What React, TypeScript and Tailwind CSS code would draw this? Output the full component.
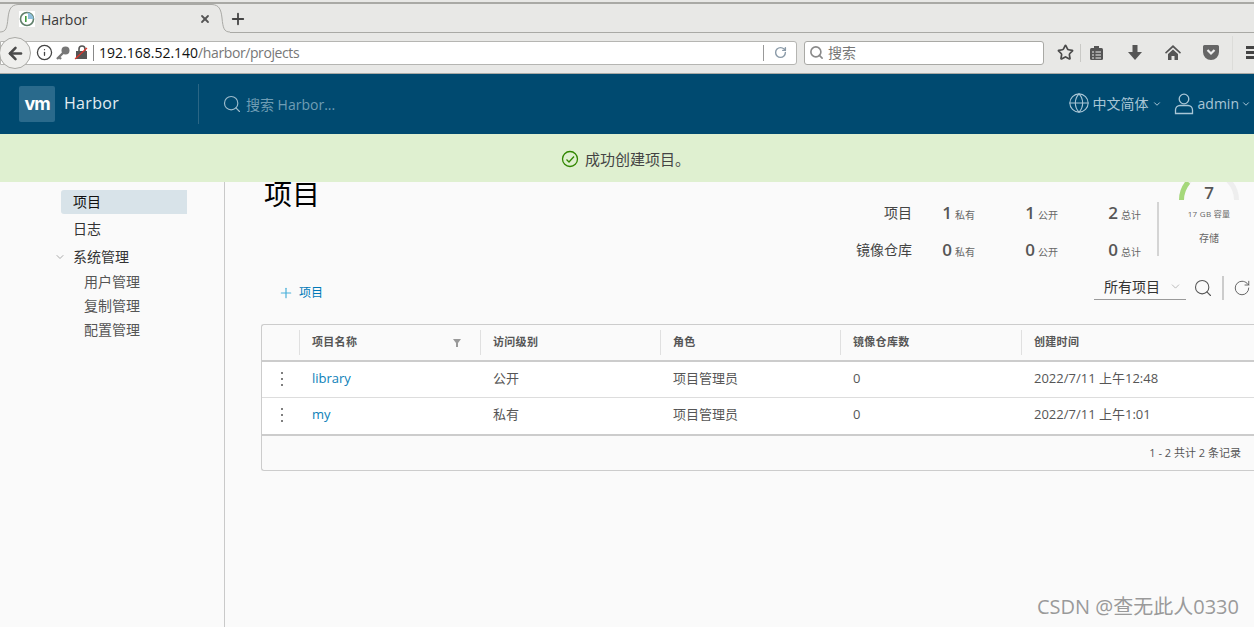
import React from "react";
import { ChevronDown, Plus, RotateCw, Search, Globe, Star, ArrowLeft, Info, X } from "lucide-react";

const cjk = "font-['Open_Sans','Noto_Sans_CJK_SC',sans-serif]";

const stats = [
  { label: "项目", cells: [["1", "私有"], ["1", "公开"], ["2", "总计"]] },
  { label: "镜像仓库", cells: [["0", "私有"], ["0", "公开"], ["0", "总计"]] },
];

const columns = [
  { name: "项目名称", width: "w-[181px]" },
  { name: "访问级别", width: "w-[180px]" },
  { name: "角色", width: "w-[180px]" },
  { name: "镜像仓库数", width: "w-[181px]" },
  { name: "创建时间", width: "flex-1" },
];

const rows = [
  { name: "library", access: "公开", role: "项目管理员", repos: "0", time: "2022/7/11 上午12:48" },
  { name: "my", access: "私有", role: "项目管理员", repos: "0", time: "2022/7/11 上午1:01" },
];

function TabBar() {
  return (
    <div className="h-[31px] border-t-2 border-[#a9a9a5] mt-[2px] -mb-px flex items-end relative">
      <div className="absolute left-0 right-0 bottom-0 h-px bg-[#a9a9a5]" />
      <div className="relative z-10 w-[230px] h-[29px] flex">
        <svg width="18" height="29" viewBox="0 0 18 29" className="shrink-0">
          <path d="M0 28C6 28 7 24 8 14C9 5 11 1 18 .5V29H0z" fill="#e8e8e6" />
          <path d="M0 28C6 28 7 24 8 14C9 5 11 1 18 .5" fill="none" stroke="#a9a9a5" />
        </svg>
        <div className="flex-1 border-t border-[#a9a9a5] bg-[#e8e8e6] flex items-center pl-[1px] pr-[1px]">
          <svg width="16" height="16" viewBox="0 0 16 16" className="shrink-0">
            <rect width="16" height="16" fill="#fff" />
            <circle cx="8" cy="8" r="6.5" fill="none" stroke="#5f7f6a" strokeWidth="1.6" />
            <path d="M8 1.500a6.500 6.500 0 0 1 6.500 6.500H9V3z" fill="#8fc0dc" />
            <rect x="6" y="5" width="1.6" height="6" fill="#3f9a3a" />
          </svg>
          <span className="ml-[6px] text-[14px] text-[#3a3a3a] font-['Open_Sans',sans-serif]">Harbor</span>
          <X size={12} strokeWidth={3.6} className="ml-auto text-[#555]" />
        </div>
        <svg width="18" height="29" viewBox="0 0 18 29" className="shrink-0">
          <path d="M18 28C12 28 11 24 10 14C9 5 7 1 0 .5V29H18z" fill="#e8e8e6" />
          <path d="M18 28C12 28 11 24 10 14C9 5 7 1 0 .5" fill="none" stroke="#a9a9a5" />
        </svg>
      </div>
      <Plus size={18} strokeWidth={2.4} className="z-10 -ml-[1px] mb-[5px] text-[#444]" />
    </div>
  );
}

function NavBar() {
  return (
    <div className="h-[42px] flex items-center relative border-b border-[#a9a9a5]">
      <div className="absolute left-[-1px] top-[5px] w-[32px] h-[32px] rounded-full bg-[#efefed] border border-[#a9a9a5] flex items-center justify-center z-10">
        <ArrowLeft size={19} strokeWidth={3.2} className="text-[#4a4a4a]" />
      </div>
      <div className="w-[797px] h-[24px] bg-white border border-[#b5b5b2] rounded-r-[3px] flex items-center pl-[35px] pr-[9px]">
        <Info size={17} strokeWidth={1.8} className="text-[#444]" />
        <svg width="14" height="14" viewBox="0 0 14 14" className="ml-[3px]">
          <circle cx="9.500" cy="4.500" r="4" fill="#777" />
          <path d="M7 7L1 13M3 11l2 2" stroke="#777" strokeWidth="2.400" fill="none" />
        </svg>
        <svg width="14" height="15" viewBox="0 0 14 15" className="ml-[4px]">
          <rect x="2" y="6" width="11" height="8" fill="#555" />
          <path d="M5 6V4a3 3 0 0 1 6 0v2" fill="none" stroke="#555" strokeWidth="1.6" />
          <path d="M1 14L13 3" stroke="#e0362c" strokeWidth="1.200" />
        </svg>
        <span className="ml-[5px] w-px h-[16px] bg-[#888]" />
        <span className="ml-[5px] text-[14px] text-[#111] font-['Open_Sans',sans-serif]">
          192.168.52.140<span className="text-[#777] tracking-[-0.4px]">/harbor/projects</span>
        </span>
        <span className="ml-auto w-px h-[16px] bg-[#999]" />
        <RotateCw size={13} strokeWidth={2.6} className="ml-[10px] text-[#8a9aa8]" />
      </div>
      <div className={`ml-[7px] w-[240px] h-[24px] bg-white border border-[#a9a9a5] rounded-[3px] flex items-center pl-[4px] ${cjk}`}>
        <Search size={15} strokeWidth={2.6} className="text-[#8a8a8a]" />
        <span className="ml-[4px] text-[14px] text-[#777]">搜索</span>
      </div>
      <Star size={17} strokeWidth={2.4} className="ml-[13px] text-[#4a4a4a]" />
      <span className="ml-[6px] w-px h-[18px] bg-[#c9c9c6]" />
      <svg width="15" height="16" viewBox="0 0 15 16" className="ml-[8px]">
        <rect x="1" y="3" width="13" height="12" rx="1.500" fill="#555" />
        <rect x="5" y="1" width="5" height="3" fill="#555" />
        <path d="M3 7h2M3 10h2M3 13h2M6.500 7H12M6.500 10H12M6.500 13H12" stroke="#eee" strokeWidth="1" />
      </svg>
      <svg width="14" height="15" viewBox="0 0 14 15" className="ml-[24px]">
        <path d="M4.500 0h5v7H14l-7 8-7-8h4.500z" fill="#555" />
      </svg>
      <svg width="16" height="15" viewBox="0 0 16 15" className="ml-[23px]">
        <path d="M8 0L0 7.500l1 1.200L8 2.500l7 6.200 1-1.200z" fill="#555" />
        <path d="M3 9l5-4.500L13 9v6H9.500v-4h-3v4H3z" fill="#555" />
      </svg>
      <svg width="16" height="15" viewBox="0 0 16 15" className="ml-[22px]">
        <path d="M1.500 0h13A1.500 1.500 0 0 1 16 1.500V7A8 8 0 0 1 0 7V1.500A1.500 1.500 0 0 1 1.500 0z" fill="#666" />
        <path d="M4.500 5L8 8.500 11.500 5" fill="none" stroke="#eee" strokeWidth="2.200" />
      </svg>
      <span className="ml-[13px] w-px h-[34px] bg-[#dcdcd9]" />
      <div className="ml-[13px] w-[8px] flex flex-col gap-[2px] overflow-hidden">
        <span className="h-[3px] w-[16px] bg-[#444]" />
        <span className="h-[3px] w-[16px] bg-[#444]" />
        <span className="h-[3px] w-[16px] bg-[#444]" />
      </div>
    </div>
  );
}

function Header() {
  return (
    <header className={`h-[60px] bg-[#004a70] flex items-center text-[#a9c6d6] ${cjk}`}>
      <div className="ml-[19px] w-[36px] h-[36px] bg-[#2a6a8c] rounded-[2px] flex items-center justify-center">
        <span className="text-white text-[18px] font-bold tracking-[-1px] font-['Inter',sans-serif] leading-none">vm</span>
      </div>
      <span className="ml-[9px] mb-[2px] text-[16px] text-[#e3edf2] tracking-[0.3px]">Harbor</span>
      <span className="ml-[79px] w-px h-[40px] bg-[#2a6685]" />
      <Search size={20} strokeWidth={1.4} className="ml-[23px] text-[#9dbccc]" />
      <span className="ml-[4px] text-[14px] text-[#6f9db4]">搜索 Harbor...</span>
      <Globe size={22} strokeWidth={1.2} className="ml-auto mb-[2px] text-[#a9c6d6]" />
      <span className="ml-[3px] mb-[2px] text-[14px]">中文简体</span>
      <ChevronDown size={10} strokeWidth={2.4} className="ml-[3px]" />
      <svg width="20" height="22" viewBox="0 0 20 22" fill="none" stroke="currentColor" strokeWidth="1.300" className="ml-[12px]">
        <circle cx="10" cy="6" r="4.800" />
        <path d="M1.500 20.500V17a4.500 4.500 0 0 1 4.500-4.500h8a4.500 4.500 0 0 1 4.500 4.500v3.500z" />
      </svg>
      <span className="ml-[4px] mb-[2px] text-[14px]">admin</span>
      <ChevronDown size={10} strokeWidth={2.4} className="ml-[2px] mr-[3px]" />
    </header>
  );
}

function Sidebar() {
  return (
    <aside className="w-[225px] shrink-0 border-r border-[#c9c9c9] pt-[8px] text-[14px] text-[#333]">
      <div className="ml-[61px] w-[126px] h-[24px] bg-[#d8e3e9] rounded-l-[3px] pl-[12px] leading-[24px] text-[#111]">项目</div>
      <div className="ml-[73px] mt-[2px] h-[25px] leading-[25px] text-[#333]">日志</div>
      <div className="ml-[54px] mt-[3px] h-[25px] flex items-center">
        <ChevronDown size={12} className="text-[#aaa]" />
        <span className="ml-[7px]">系统管理</span>
      </div>
      <div className="ml-[84px] mt-[1px] text-[#555]">
        <div className="h-[24px] leading-[24px]">用户管理</div>
        <div className="h-[24px] leading-[24px]">复制管理</div>
        <div className="h-[24px] leading-[24px]">配置管理</div>
      </div>
    </aside>
  );
}

function StatsPanel() {
  return (
    <div className="flex">
      <div className="grid grid-cols-[auto_63px_83px_83px] grid-rows-[37px_37px] items-center mt-[12px] h-[74px]">
        {stats.map((row) => (
          <React.Fragment key={row.label}>
            <span className="text-right text-[14px] text-[#444]">{row.label}</span>
            {row.cells.map(([num, label], i) => (
              <span key={i} className="text-right text-[#666]">
                <span className="text-[17px] font-semibold text-[#565656]">{num}</span>
                <span className="ml-[3px] text-[10px]">{label}</span>
              </span>
            ))}
          </React.Fragment>
        ))}
      </div>
      <div className="ml-[16px] mt-[20px] h-[54px] w-[2px] bg-[#d4d4d4]" />
      <div className="relative w-[95px] flex flex-col items-center pl-[5px]">
        <svg width="64" height="18" viewBox="0 0 64 18" className="shrink-0">
          <path d="M4.500 18A27.500 27.500 0 0 1 59.500 18" fill="none" stroke="#eeeeee" strokeWidth="5" />
          <path d="M4.500 18A27.500 27.500 0 0 1 11.200 0" fill="none" stroke="#a5d87a" strokeWidth="5" />
        </svg>
        <span className="absolute -top-[2px] text-[17px] font-semibold text-[#565656]">7</span>
        <span className="mt-[8px] text-[8px] text-[#666] tracking-[0.3px] leading-[12px] whitespace-nowrap">17 GB 容量</span>
        <span className="mt-[11px] text-[10px] text-[#666] leading-[14px]">存储</span>
      </div>
    </div>
  );
}

function ProjectTable() {
  return (
    <div className="ml-[36px] h-[147px] border border-[#ccc] border-r-0 rounded-l-[3px] bg-[#fafafa] flex flex-col">
      <div className="h-[35px] flex items-center shrink-0 text-[11px] font-semibold text-[#565656] tracking-[0.3px]">
        <div className="w-[37px]" />
        {columns.map((col, i) => (
          <div key={col.name} className={`${col.width} h-[25px] border-l border-[#e0e0e0] pl-[12px] flex items-center`}>
            <span>{col.name}</span>
            {i === 0 && (
              <svg width="8" height="8" viewBox="0 0 8 8" className="ml-[96px]">
                <path d="M0 0h8L5 4v4H3V4z" fill="#999" />
              </svg>
            )}
          </div>
        ))}
      </div>
      <div className="h-[2px] bg-[#ccc]" />
      {rows.map((row, i) => (
        <div key={row.name} className={`h-[36px] pb-[2px] flex items-center bg-white text-[13px] text-[#565656] ${i === 0 ? "border-b border-[#ddd]" : ""}`}>
          <div className="w-[37px] flex flex-col items-center gap-[4px] pl-[3px]">
            <span className="w-[2px] h-[2px] bg-[#555] rounded-full" />
            <span className="w-[2px] h-[2px] bg-[#555] rounded-full" />
            <span className="w-[2px] h-[2px] bg-[#555] rounded-full" />
          </div>
          <div className="w-[181px] pl-[13px] text-[#0d7fb8]">{row.name}</div>
          <div className="w-[180px] pl-[13px]">{row.access}</div>
          <div className="w-[180px] pl-[13px]">{row.role}</div>
          <div className="w-[181px] pl-[13px]">{row.repos}</div>
          <div className="flex-1 pl-[13px]">{row.time}</div>
        </div>
      ))}
      <div className="h-[2px] bg-[#ccc]" />
      <div className="flex-1 flex items-center justify-end pr-[13px] text-[11px] text-[#565656]">1 - 2 共计 2 条记录</div>
    </div>
  );
}

export default function App() {
  return (
    <div className={`w-[1254px] h-[627px] overflow-hidden flex flex-col bg-[#fafafa] relative ${cjk}`}>
      <div className="h-[74px] shrink-0 bg-[#e8e8e6] overflow-hidden">
        <TabBar />
        <NavBar />
      </div>
      <Header />
      <div className="h-[48px] shrink-0 bg-[#dff0d0] flex items-center justify-center text-[15px] text-[#444] pt-[2px] pr-[3px]">
        <svg width="18" height="18" viewBox="0 0 18 18" className="mr-[6px]">
          <circle cx="9" cy="9" r="7.500" fill="none" stroke="#318700" strokeWidth="1.300" />
          <path d="M5.500 9.500l2.500 2.500 5-5.500" fill="none" stroke="#318700" strokeWidth="1.300" />
        </svg>
        成功创建项目。
      </div>
      <div className="flex-1 flex min-h-0">
        <Sidebar />
        <main className="flex-1 min-w-0">
          <div className="flex justify-between h-[92px]">
            <h1 className="ml-[39px] text-[28px] leading-[28px] text-black -mt-[2px]">项目</h1>
            <StatsPanel />
          </div>
          <div className="h-[50px] pt-[2px] flex items-start">
            <div className="ml-[53px] mt-[8px] h-[18px] flex items-center text-[12px] text-[#0079b8]">
              <Plus size={16} strokeWidth={1.8} className="text-[#49afd9]" />
              <span className="ml-[5px]">项目</span>
            </div>
            <div className="ml-auto flex items-center">
              <div className="w-[92px] h-[24px] pb-[2px] border-b border-[#9a9a9a] flex items-center pl-[10px] text-[14px] text-[#333]">
                所有项目
                <ChevronDown size={13} strokeWidth={1.2} className="ml-auto mr-[4px] text-[#999]" />
              </div>
              <Search size={20} strokeWidth={1.3} className="ml-[7px] text-[#565656]" />
              <span className="ml-[9px] w-[2px] h-[24px] bg-[#ccc]" />
              <RotateCw size={18} strokeWidth={1.2} className="ml-[9px] mr-[3px] text-[#565656]" />
            </div>
          </div>
          <ProjectTable />
        </main>
      </div>
      <span className="absolute right-[15px] bottom-[8px] text-[20px] leading-[24px] text-[#9a9a9a]">CSDN @查无此人0330</span>
    </div>
  );
}
